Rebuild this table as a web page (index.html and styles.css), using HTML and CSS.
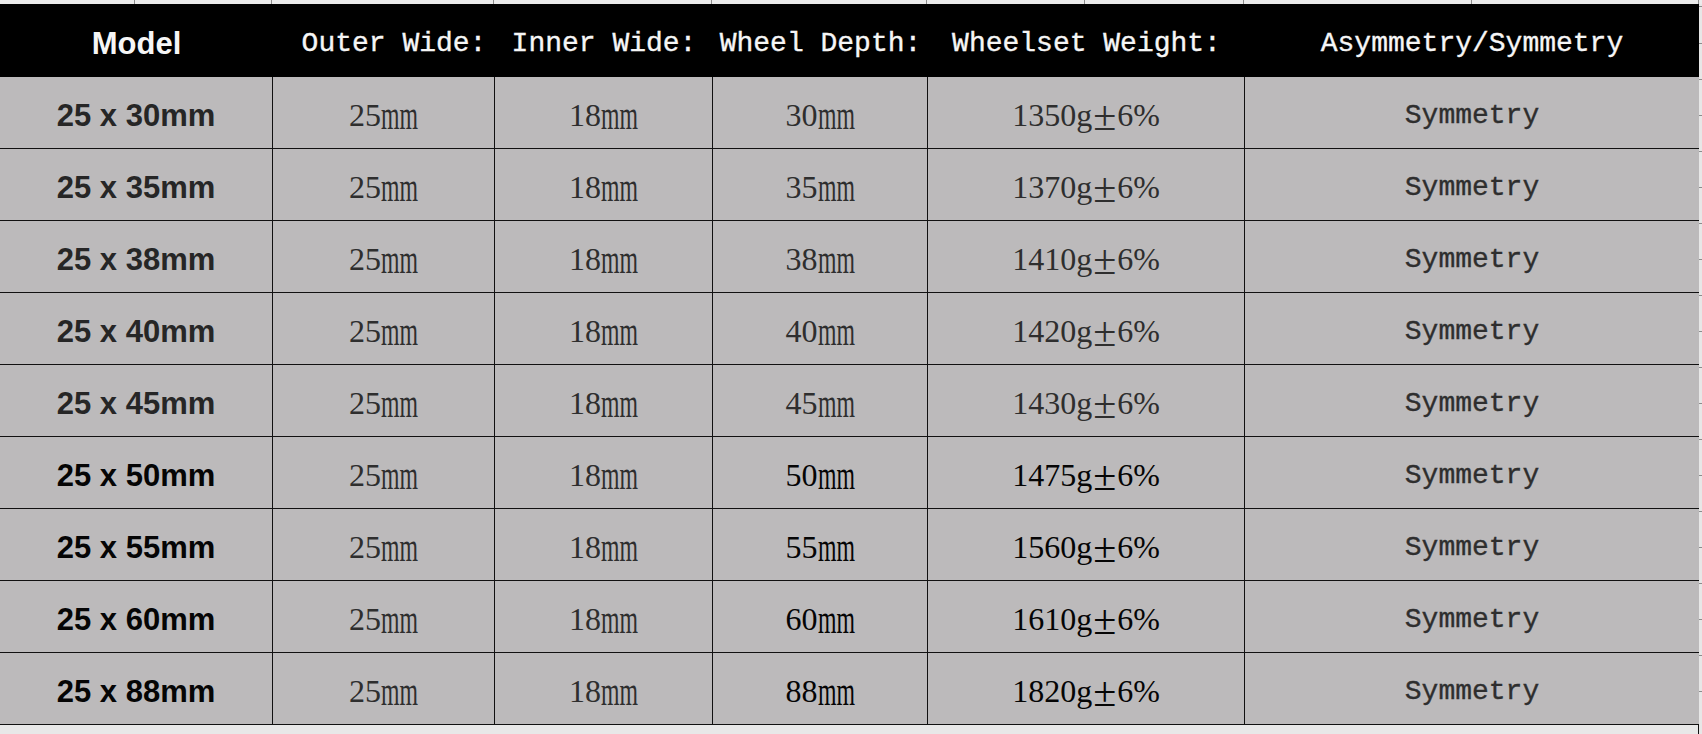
FILE: index.html
```html
<!DOCTYPE html>
<html>
<head>
<meta charset="utf-8">
<link rel="stylesheet" href="styles.css">
</head>
<body>
<div class="strip">
  <span class="g" style="width:135px"></span><span class="g" style="width:137px"></span><span class="g" style="width:222px"></span><span class="g" style="width:218px"></span><span class="g" style="width:215px"></span><span class="g" style="width:158px"></span><span class="g" style="width:159px"></span><span class="g" style="width:228px"></span><span class="g" style="width:227px"></span>
</div>
<div class="main">
  <div class="sheet">
    <div class="h sans">Model</div>
    <div class="h mono outer">Outer Wide:</div>
    <div class="h mono">Inner Wide:</div>
    <div class="h mono">Wheel Depth:</div>
    <div class="h mono">Wheelset Weight:</div>
    <div class="h mono">Asymmetry/Symmetry</div>

    <div class="c model">25 x 30mm</div><div class="c num">25<span class="mm">mm</span></div><div class="c num">18<span class="mm">mm</span></div><div class="c num">30<span class="mm">mm</span></div><div class="c num">1350g<span class="pm">±</span>6%</div><div class="c mono">Symmetry</div>
    <div class="c model">25 x 35mm</div><div class="c num">25<span class="mm">mm</span></div><div class="c num">18<span class="mm">mm</span></div><div class="c num">35<span class="mm">mm</span></div><div class="c num">1370g<span class="pm">±</span>6%</div><div class="c mono">Symmetry</div>
    <div class="c model">25 x 38mm</div><div class="c num">25<span class="mm">mm</span></div><div class="c num">18<span class="mm">mm</span></div><div class="c num">38<span class="mm">mm</span></div><div class="c num">1410g<span class="pm">±</span>6%</div><div class="c mono">Symmetry</div>
    <div class="c model">25 x 40mm</div><div class="c num">25<span class="mm">mm</span></div><div class="c num">18<span class="mm">mm</span></div><div class="c num">40<span class="mm">mm</span></div><div class="c num">1420g<span class="pm">±</span>6%</div><div class="c mono">Symmetry</div>
    <div class="c model">25 x 45mm</div><div class="c num">25<span class="mm">mm</span></div><div class="c num">18<span class="mm">mm</span></div><div class="c num">45<span class="mm">mm</span></div><div class="c num">1430g<span class="pm">±</span>6%</div><div class="c mono">Symmetry</div>
    <div class="c model dark">25 x 50mm</div><div class="c num">25<span class="mm">mm</span></div><div class="c num">18<span class="mm">mm</span></div><div class="c num dark">50<span class="mm">mm</span></div><div class="c num dark">1475g<span class="pm">±</span>6%</div><div class="c mono">Symmetry</div>
    <div class="c model dark">25 x 55mm</div><div class="c num">25<span class="mm">mm</span></div><div class="c num">18<span class="mm">mm</span></div><div class="c num dark">55<span class="mm">mm</span></div><div class="c num dark">1560g<span class="pm">±</span>6%</div><div class="c mono">Symmetry</div>
    <div class="c model dark">25 x 60mm</div><div class="c num">25<span class="mm">mm</span></div><div class="c num">18<span class="mm">mm</span></div><div class="c num dark">60<span class="mm">mm</span></div><div class="c num dark">1610g<span class="pm">±</span>6%</div><div class="c mono">Symmetry</div>
    <div class="c model dark">25 x 88mm</div><div class="c num">25<span class="mm">mm</span></div><div class="c num">18<span class="mm">mm</span></div><div class="c num dark">88<span class="mm">mm</span></div><div class="c num dark">1820g<span class="pm">±</span>6%</div><div class="c mono">Symmetry</div>
  </div>
  <div class="gutter"></div>
</div>
<div class="bottom"></div>
</body>
</html>
```

FILE: styles.css
```css
* { box-sizing: border-box; }
html, body {
  margin: 0;
  padding: 0;
  background: #e7e7e7;
  overflow: hidden;
}
body {
  width: 1702px;
  height: 734px;
}
.strip {
  display: flex;
  height: 4px;
  background: #ececec;
}
.strip .g {
  height: 4px;
  border-right: 1px solid #8c8c8c;
  flex: none;
}
.main {
  display: flex;
}
.sheet {
  display: grid;
  grid-template-columns: 273px 222px 218px 215px 317px 454px;
  grid-template-rows: 73px repeat(9, 72px);
  border-right: 1px solid #111;
  width: 1699px;
}
.gutter {
  width: 3px;
  background-color: #e7e7e7;
  background-image: repeating-linear-gradient(to bottom, transparent 0, transparent 35px, #8c8c8c 35px, #8c8c8c 36px);
  background-position: 0 4px;
}
.bottom {
  height: 9px;
  background: #e8e8e8;
  width: 1699px;
  border-right: 1px solid #111;
}
.h {
  background: #000;
  color: #f6f6f6;
  display: flex;
  align-items: center;
  justify-content: center;
  padding-top: 6px;
  white-space: nowrap;
}
.h.outer { padding-left: 20px; }
.sans {
  font-family: "Liberation Sans", Arial, sans-serif;
  font-weight: bold;
  font-size: 31px;
}
.mono {
  font-family: "Liberation Mono", "Courier New", monospace;
  font-size: 28px;
  -webkit-text-stroke: 0.35px currentColor;
}
.c {
  background: #bcbabb;
  border-bottom: 1px solid #111;
  display: flex;
  align-items: center;
  justify-content: center;
  padding-top: 6px;
  color: #2e2e2e;
  white-space: nowrap;
}
.c:not(:nth-child(6n)) {
  border-right: 1px solid #111;
}
.model {
  font-family: "Liberation Sans", Arial, sans-serif;
  font-weight: bold;
  font-size: 31px;
  color: #262626;
}
.num {
  font-family: "Liberation Serif", "Times New Roman", serif;
  font-size: 32px;
}
.dark { color: #050505; }
.mm {
  display: inline-block;
  font-size: 41px;
  line-height: 1;
  transform: scaleX(0.58);
  transform-origin: 0 50%;
  margin-right: -27px;
}
.pm {
  font-size: 42px;
  line-height: 1;
  margin: 0 1px;
}
```
